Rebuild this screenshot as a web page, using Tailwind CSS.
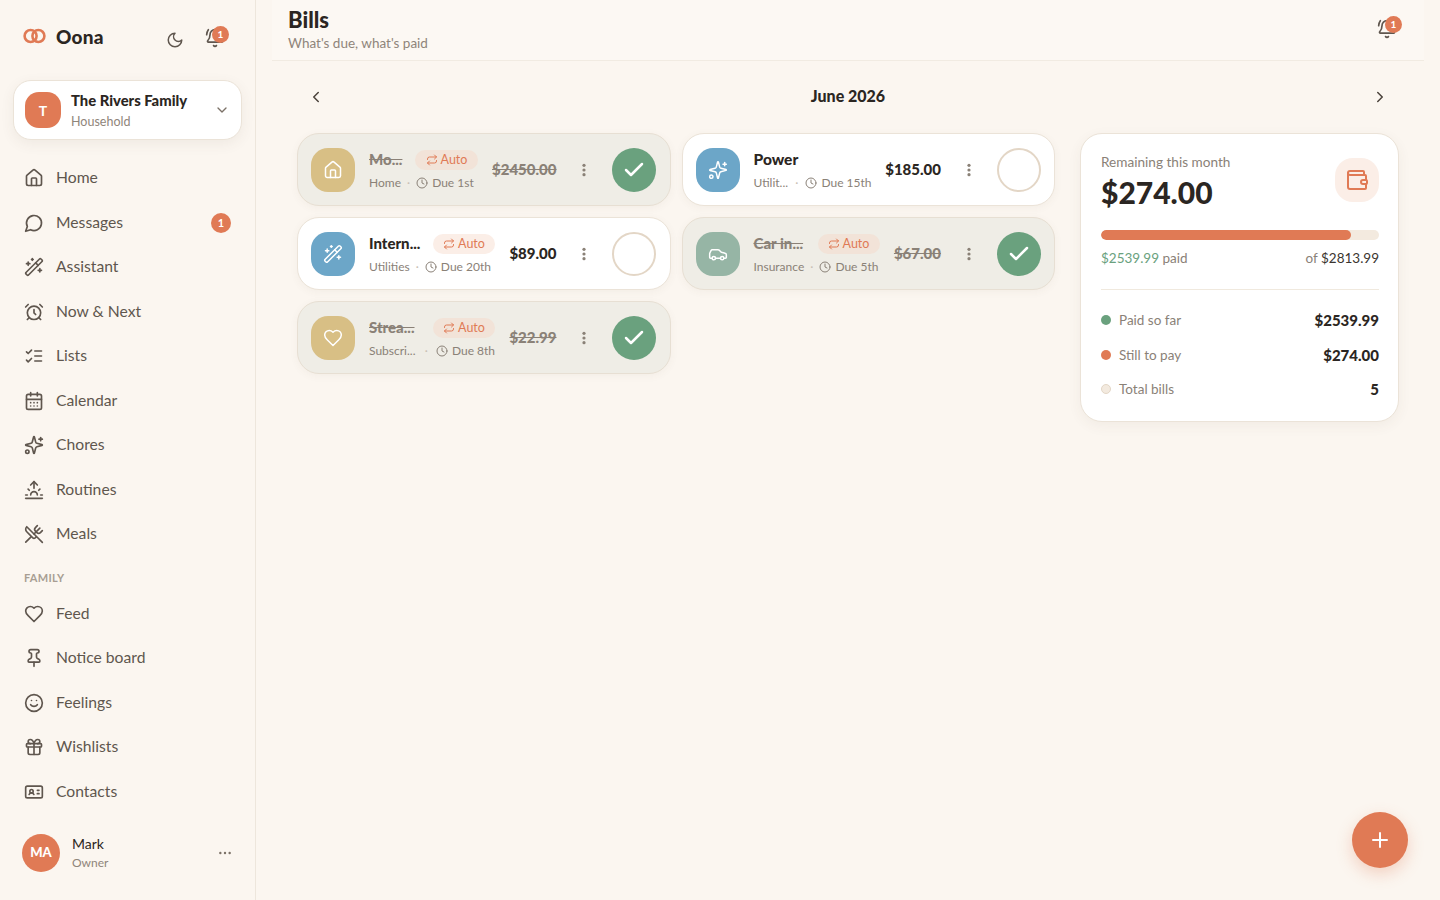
<!DOCTYPE html>
<html lang="en">
<head>
  <meta charset="UTF-8" />
  <title>Bills</title>
  <script src="https://cdn.jsdelivr.net/npm/@tailwindcss/browser@4"></script>
</head>
<body class="bg-[#fbf6f0] text-[#2b2622] font-['Lato',sans-serif]">

<!-- Icons -->
<svg class="hidden">
  <symbol id="i-house" viewBox="0 0 24 24"><path d="M15 21v-8a1 1 0 0 0-1-1h-4a1 1 0 0 0-1 1v8"/><path d="M3 10a2 2 0 0 1 .709-1.528l7-5.999a2 2 0 0 1 2.582 0l7 5.999A2 2 0 0 1 21 10v9a2 2 0 0 1-2 2H5a2 2 0 0 1-2-2z"/></symbol>
  <symbol id="i-message" viewBox="0 0 24 24"><path d="M7.9 20A9 9 0 1 0 4 16.1L2 22Z"/></symbol>
  <symbol id="i-wand" viewBox="0 0 24 24"><path d="m21.64 3.64-1.28-1.28a1.21 1.21 0 0 0-1.72 0L2.36 18.64a1.21 1.21 0 0 0 0 1.72l1.28 1.28a1.2 1.2 0 0 0 1.72 0L21.64 5.36a1.2 1.2 0 0 0 0-1.72"/><path d="m14 7 3 3"/><path d="M5 6v4"/><path d="M19 14v4"/><path d="M10 2v2"/><path d="M7 8H3"/><path d="M21 16h-4"/><path d="M11 3H9"/></symbol>
  <symbol id="i-alarm" viewBox="0 0 24 24"><circle cx="12" cy="13" r="8"/><path d="M12 9v4l2 2"/><path d="M5 3 2 6"/><path d="m22 6-3-3"/><path d="M6.38 18.7 4 21"/><path d="M17.64 18.67 20 21"/></symbol>
  <symbol id="i-list" viewBox="0 0 24 24"><path d="m3 17 2 2 4-4"/><path d="m3 7 2 2 4-4"/><path d="M13 6h8"/><path d="M13 12h8"/><path d="M13 18h8"/></symbol>
  <symbol id="i-calendar" viewBox="0 0 24 24"><path d="M8 2v4"/><path d="M16 2v4"/><rect x="3" y="4" width="18" height="18" rx="2"/><path d="M3 10h18"/><path d="M8 14h.01"/><path d="M12 14h.01"/><path d="M16 14h.01"/><path d="M8 18h.01"/><path d="M12 18h.01"/><path d="M16 18h.01"/></symbol>
  <symbol id="i-sparkles" viewBox="0 0 24 24"><path d="M9.937 15.5A2 2 0 0 0 8.5 14.063l-6.135-1.582a.5.5 0 0 1 0-.962L8.5 9.936A2 2 0 0 0 9.937 8.5l1.582-6.135a.5.5 0 0 1 .963 0L14.063 8.5A2 2 0 0 0 15.5 9.937l6.135 1.581a.5.5 0 0 1 0 .964L15.5 14.063a2 2 0 0 0-1.437 1.437l-1.582 6.135a.5.5 0 0 1-.963 0z"/><path d="M20 3v4"/><path d="M22 5h-4"/><circle cx="4" cy="20" r="2"/></symbol>
  <symbol id="i-sunrise" viewBox="0 0 24 24"><path d="M12 2v8"/><path d="m4.93 10.93 1.41 1.41"/><path d="M2 18h2"/><path d="M20 18h2"/><path d="m19.07 10.93-1.41 1.41"/><path d="M22 22H2"/><path d="m8 6 4-4 4 4"/><path d="M16 18a4 4 0 0 0-8 0"/></symbol>
  <symbol id="i-utensils" viewBox="0 0 24 24"><path d="m16 2-2.3 2.3a3 3 0 0 0 0 4.2l1.8 1.8a3 3 0 0 0 4.2 0L22 8"/><path d="M15 15 3.3 3.3a4.2 4.2 0 0 0 0 6l7.3 7.3c.7.7 2 .7 2.8 0L15 15Zm0 0 7 7"/><path d="m2.1 21.8 6.4-6.3"/><path d="m19 5-7 7"/></symbol>
  <symbol id="i-heart" viewBox="0 0 24 24"><path d="M19 14c1.49-1.46 3-3.21 3-5.5A5.5 5.5 0 0 0 16.5 3c-1.76 0-3 .5-4.5 2-1.5-1.5-2.74-2-4.5-2A5.5 5.5 0 0 0 2 8.5c0 2.3 1.5 4.05 3 5.5l7 7Z"/></symbol>
  <symbol id="i-pin" viewBox="0 0 24 24"><path d="M12 17v5"/><path d="M9 10.76a2 2 0 0 1-1.11 1.79l-1.78.9A2 2 0 0 0 5 15.24V16a1 1 0 0 0 1 1h12a1 1 0 0 0 1-1v-.76a2 2 0 0 0-1.11-1.79l-1.78-.9A2 2 0 0 1 15 10.76V7a1 1 0 0 1 1-1 2 2 0 0 0 0-4H8a2 2 0 0 0 0 4 1 1 0 0 1 1 1z"/></symbol>
  <symbol id="i-smile" viewBox="0 0 24 24"><circle cx="12" cy="12" r="10"/><path d="M8 14s1.5 2 4 2 4-2 4-2"/><path d="M9 9h.01"/><path d="M15 9h.01"/></symbol>
  <symbol id="i-gift" viewBox="0 0 24 24"><rect x="3" y="8" width="18" height="4" rx="1"/><path d="M12 8v13"/><path d="M19 12v7a2 2 0 0 1-2 2H7a2 2 0 0 1-2-2v-7"/><path d="M7.5 8a2.5 2.5 0 0 1 0-5A4.8 8 0 0 1 12 8a4.8 8 0 0 1 4.5-5 2.5 2.5 0 0 1 0 5"/></symbol>
  <symbol id="i-contact" viewBox="0 0 24 24"><path d="M16 10h2"/><path d="M16 14h2"/><path d="M6.17 15a3 3 0 0 1 5.66 0"/><circle cx="9" cy="11" r="2"/><rect x="2" y="5" width="20" height="14" rx="2"/></symbol>
  <symbol id="i-moon" viewBox="0 0 24 24"><path d="M12 3a6 6 0 0 0 9 9 9 9 0 1 1-9-9Z"/></symbol>
  <symbol id="i-bell" viewBox="0 0 24 24"><path d="M10.268 21a2 2 0 0 0 3.464 0"/><path d="M22 8c0-2.3-.8-4.3-2-6"/><path d="M3.262 15.326A1 1 0 0 0 4 17h16a1 1 0 0 0 .74-1.673C19.41 13.956 18 12.499 18 8A6 6 0 0 0 6 8c0 4.499-1.411 5.956-2.738 7.326"/><path d="M4 2C2.8 3.7 2 5.7 2 8"/></symbol>
  <symbol id="i-repeat" viewBox="0 0 24 24"><path d="m17 2 4 4-4 4"/><path d="M3 11v-1a4 4 0 0 1 4-4h14"/><path d="m7 22-4-4 4-4"/><path d="M21 13v1a4 4 0 0 1-4 4H3"/></symbol>
  <symbol id="i-clock" viewBox="0 0 24 24"><circle cx="12" cy="12" r="10"/><path d="M12 6v6l4 2"/></symbol>
  <symbol id="i-car" viewBox="0 0 24 24"><path d="M19 17h2c.6 0 1-.4 1-1v-3c0-.9-.7-1.7-1.500-1.900C18.700 10.600 16 10 16 10s-1.300-1.400-2.200-2.300c-.5-.4-1.100-.7-1.800-.7H5c-.6 0-1.100.4-1.400.9l-1.400 2.900A3.700 3.700 0 0 0 2 12v4c0 .6.4 1 1 1h2"/><circle cx="7" cy="17" r="2"/><path d="M9 17h6"/><circle cx="17" cy="17" r="2"/></symbol>
  <symbol id="i-wallet" viewBox="0 0 24 24"><path d="M19 7V4a1 1 0 0 0-1-1H5a2 2 0 0 0 0 4h15a1 1 0 0 1 1 1v4h-3a2 2 0 0 0 0 4h3a1 1 0 0 0 1-1v-2a1 1 0 0 0-1-1"/><path d="M3 5v14a2 2 0 0 0 2 2h15a1 1 0 0 0 1-1v-4"/></symbol>
  <symbol id="i-check" viewBox="0 0 24 24"><path d="M20 6 9 17l-5-5"/></symbol>
  <symbol id="i-dots" viewBox="0 0 24 24"><circle cx="12" cy="5" r="2.400"/><circle cx="12" cy="12" r="2.400"/><circle cx="12" cy="19" r="2.400"/></symbol>
</svg>

<div class="flex h-[900px] overflow-hidden">

  <!-- Sidebar -->
  <aside class="w-[256px] shrink-0 border-r border-[#ede6dc] flex flex-col">
    <div class="h-[80px] shrink-0 pl-[23px] pr-[30px] pb-[8px] flex items-center">
      <svg class="w-[23px] h-[16px] mr-[10px]" viewBox="0 0 23 16" fill="none" stroke="#e07a55" stroke-width="2.600">
        <circle cx="7.600" cy="8" r="6"/><circle cx="15.400" cy="8" r="6"/>
      </svg>
      <span class="text-[19px] leading-none font-black tracking-[0.2px]">Oona</span>
      <svg class="w-[18px] h-[18px] ml-auto mt-[8px] fill-none stroke-[#5f564e] stroke-2 [stroke-linecap:round] [stroke-linejoin:round]"><use href="#i-moon"/></svg>
      <div class="relative ml-[21px] mt-[4px] w-[20px] h-[20px]">
        <svg class="w-[20px] h-[20px] fill-none stroke-[#5f564e] stroke-2 [stroke-linecap:round] [stroke-linejoin:round]"><use href="#i-bell"/></svg>
        <span class="absolute -top-[2px] left-[7px] w-[17px] h-[17px] rounded-full bg-[#e07a55] text-white text-[10px] font-bold flex items-center justify-center">1</span>
      </div>
    </div>

    <div class="mx-[13px] h-[60px] shrink-0 bg-white border border-[#ebe3d8] rounded-[18px] shadow-[0_4px_14px_rgba(90,70,50,0.07)] flex items-center pl-[11px] pr-[11px]">
      <div class="w-[36px] h-[36px] rounded-[14px] bg-[#e07a55] text-white font-bold text-[14px] flex items-center justify-center">T</div>
      <div class="ml-[10px] flex-1">
        <div class="text-[14.800px] leading-[18px] font-black">The Rivers Family</div>
        <div class="text-[12.500px] leading-[16px] mt-[5px] text-[#8f857a]">Household</div>
      </div>
      <svg class="w-[16px] h-[16px] fill-none stroke-[#7b7167] stroke-2 [stroke-linecap:round] [stroke-linejoin:round]" viewBox="0 0 24 24"><path d="m6 9 6 6 6-6"/></svg>
    </div>

    <nav class="mt-[16px] text-[15.700px] text-[#5f564e]">
      <a class="h-[44.500px] pl-[24px] pr-[24px] flex items-center gap-[12px]"><svg class="w-[20px] h-[20px] fill-none stroke-current stroke-2 [stroke-linecap:round] [stroke-linejoin:round]"><use href="#i-house"/></svg>Home</a>
      <a class="h-[44.500px] pl-[24px] pr-[24px] flex items-center gap-[12px]"><svg class="w-[20px] h-[20px] fill-none stroke-current stroke-2 [stroke-linecap:round] [stroke-linejoin:round]"><use href="#i-message"/></svg>Messages<span class="ml-auto w-[20px] h-[20px] rounded-full bg-[#e07a55] text-white text-[11px] font-bold flex items-center justify-center">1</span></a>
      <a class="h-[44.500px] pl-[24px] pr-[24px] flex items-center gap-[12px]"><svg class="w-[20px] h-[20px] fill-none stroke-current stroke-2 [stroke-linecap:round] [stroke-linejoin:round]"><use href="#i-wand"/></svg>Assistant</a>
      <a class="h-[44.500px] pl-[24px] pr-[24px] flex items-center gap-[12px]"><svg class="w-[20px] h-[20px] fill-none stroke-current stroke-2 [stroke-linecap:round] [stroke-linejoin:round]"><use href="#i-alarm"/></svg>Now &amp; Next</a>
      <a class="h-[44.500px] pl-[24px] pr-[24px] flex items-center gap-[12px]"><svg class="w-[20px] h-[20px] fill-none stroke-current stroke-2 [stroke-linecap:round] [stroke-linejoin:round]"><use href="#i-list"/></svg>Lists</a>
      <a class="h-[44.500px] pl-[24px] pr-[24px] flex items-center gap-[12px]"><svg class="w-[20px] h-[20px] fill-none stroke-current stroke-2 [stroke-linecap:round] [stroke-linejoin:round]"><use href="#i-calendar"/></svg>Calendar</a>
      <a class="h-[44.500px] pl-[24px] pr-[24px] flex items-center gap-[12px]"><svg class="w-[20px] h-[20px] fill-none stroke-current stroke-2 [stroke-linecap:round] [stroke-linejoin:round]"><use href="#i-sparkles"/></svg>Chores</a>
      <a class="h-[44.500px] pl-[24px] pr-[24px] flex items-center gap-[12px]"><svg class="w-[20px] h-[20px] fill-none stroke-current stroke-2 [stroke-linecap:round] [stroke-linejoin:round]"><use href="#i-sunrise"/></svg>Routines</a>
      <a class="h-[44.500px] pl-[24px] pr-[24px] flex items-center gap-[12px]"><svg class="w-[20px] h-[20px] fill-none stroke-current stroke-2 [stroke-linecap:round] [stroke-linejoin:round]"><use href="#i-utensils"/></svg>Meals</a>

      <div class="pl-[24px] h-[35px] pt-[13px] text-[11px] leading-[16px] font-bold tracking-[0.3px] text-[#a89e93]">FAMILY</div>

      <a class="h-[44.500px] pl-[24px] pr-[24px] flex items-center gap-[12px]"><svg class="w-[20px] h-[20px] fill-none stroke-current stroke-2 [stroke-linecap:round] [stroke-linejoin:round]"><use href="#i-heart"/></svg>Feed</a>
      <a class="h-[44.500px] pl-[24px] pr-[24px] flex items-center gap-[12px]"><svg class="w-[20px] h-[20px] fill-none stroke-current stroke-2 [stroke-linecap:round] [stroke-linejoin:round]"><use href="#i-pin"/></svg>Notice board</a>
      <a class="h-[44.500px] pl-[24px] pr-[24px] flex items-center gap-[12px]"><svg class="w-[20px] h-[20px] fill-none stroke-current stroke-2 [stroke-linecap:round] [stroke-linejoin:round]"><use href="#i-smile"/></svg>Feelings</a>
      <a class="h-[44.500px] pl-[24px] pr-[24px] flex items-center gap-[12px]"><svg class="w-[20px] h-[20px] fill-none stroke-current stroke-2 [stroke-linecap:round] [stroke-linejoin:round]"><use href="#i-gift"/></svg>Wishlists</a>
      <a class="h-[44.500px] pl-[24px] pr-[24px] flex items-center gap-[12px]"><svg class="w-[20px] h-[20px] fill-none stroke-current stroke-2 [stroke-linecap:round] [stroke-linejoin:round]"><use href="#i-contact"/></svg>Contacts</a>
    </nav>

    <div class="mt-auto mb-[28px] pl-[22px] pr-[22px] flex items-center">
      <div class="w-[38px] h-[38px] rounded-full bg-[#e07a55] text-white text-[13px] font-black flex items-center justify-center">MA</div>
      <div class="ml-[12px] flex-1">
        <div class="text-[14px] leading-[18px] text-[#2b2622]">Mark</div>
        <div class="text-[12px] leading-[16px] mt-[2px] text-[#8f857a]">Owner</div>
      </div>
      <svg class="w-[16px] h-[16px] fill-[#7b7167]" viewBox="0 0 24 24"><circle cx="5" cy="12" r="1.800"/><circle cx="12" cy="12" r="1.800"/><circle cx="19" cy="12" r="1.800"/></svg>
    </div>
  </aside>

  <!-- Main -->
  <main class="flex-1 min-w-0 relative">
    <header class="mx-[16px] h-[61px] border-b border-[#f1ebe2] bg-[#fcf8f3] px-[16px] flex items-center justify-between">
      <div class="-mt-[1px]">
        <h1 class="text-[22px] leading-[26px] font-black">Bills</h1>
        <p class="text-[13.500px] leading-[20px] text-[#8f857a]">What's due, what's paid</p>
      </div>
      <div class="relative w-[20px] h-[20px] mr-[11px] mt-[-3px]">
        <svg class="w-[20px] h-[20px] fill-none stroke-[#5f564e] stroke-2 [stroke-linecap:round] [stroke-linejoin:round]"><use href="#i-bell"/></svg>
        <span class="absolute -top-[3px] left-[8px] w-[17px] h-[17px] rounded-full bg-[#e07a55] text-white text-[10px] font-bold flex items-center justify-center">1</span>
      </div>
    </header>

    <div class="pl-[41px] pr-[41px]">
      <div class="h-[72px] -mx-[1px] flex items-center justify-between">
        <button class="w-10 h-10 flex items-center justify-center"><svg class="w-[18px] h-[18px] fill-none stroke-[#4a423b] stroke-2 [stroke-linecap:round] [stroke-linejoin:round]" viewBox="0 0 24 24"><path d="m15 18-6-6 6-6"/></svg></button>
        <div class="text-[16px] font-black -mt-[3px]">June 2026</div>
        <button class="w-10 h-10 flex items-center justify-center"><svg class="w-[18px] h-[18px] fill-none stroke-[#4a423b] stroke-2 [stroke-linecap:round] [stroke-linejoin:round]" viewBox="0 0 24 24"><path d="m9 18 6-6-6-6"/></svg></button>
      </div>

      <div class="flex gap-[25px] items-start">
        <!-- Bills -->
        <div class="w-[758px] shrink-0 grid grid-cols-2 gap-x-[11px] items-start">

          <div class="flex flex-col gap-[11px]">
            <div class="h-[73px] rounded-[22px] border border-[#e7dfd3] bg-[#efede6] shadow-[0_2px_8px_rgba(90,70,50,0.05)] pl-[13px] pr-[14px] flex items-center">
              <div class="w-[44px] h-[44px] shrink-0 rounded-[17px] bg-[#d8bf85] text-white flex items-center justify-center"><svg class="w-[20px] h-[20px] fill-none stroke-current stroke-[1.800] [stroke-linecap:round] [stroke-linejoin:round]"><use href="#i-house"/></svg></div>
              <div class="ml-[14px] w-[109px] shrink-0 text-[#8a8177]">
                <div class="flex items-center h-[24px] whitespace-nowrap"><span class="w-[32px] text-[15px] font-black line-through">Mo...</span><span class="ml-[14px] mt-[1px] h-[20px] w-[63px] shrink-0 rounded-full bg-[#f2e3d8] text-[#e07a55] text-[12.500px] flex items-center justify-center gap-[3px]"><svg class="w-[12px] h-[12px] fill-none stroke-current stroke-2 [stroke-linecap:round] [stroke-linejoin:round]"><use href="#i-repeat"/></svg>Auto</span></div>
                <div class="flex items-center h-[18px] mt-[2px] text-[12px] whitespace-nowrap"><span>Home</span><span class="mx-[6px] text-[#c9c0b5]">·</span><svg class="w-[12px] h-[12px] mr-[4px] shrink-0 fill-none stroke-current stroke-2 [stroke-linecap:round] [stroke-linejoin:round]"><use href="#i-clock"/></svg><span>Due 1st</span></div>
              </div>
              <div class="ml-auto text-[15px] font-black line-through text-[#8a8177]">$2450.00</div>
              <svg class="w-[16px] h-[16px] ml-[19px] mr-[20px] shrink-0 fill-[#8a8177]"><use href="#i-dots"/></svg>
              <div class="w-[44px] h-[44px] shrink-0 rounded-full bg-[#6aa17e] text-white flex items-center justify-center"><svg class="w-[24px] h-[24px] fill-none stroke-current stroke-[2.500] [stroke-linecap:round] [stroke-linejoin:round]"><use href="#i-check"/></svg></div>
            </div>

            <div class="h-[73px] rounded-[22px] border border-[#ebe3d8] bg-white shadow-[0_2px_8px_rgba(90,70,50,0.05)] pl-[13px] pr-[14px] flex items-center">
              <div class="w-[44px] h-[44px] shrink-0 rounded-[17px] bg-[#6ca6c8] text-white flex items-center justify-center"><svg class="w-[20px] h-[20px] fill-none stroke-current stroke-[1.800] [stroke-linecap:round] [stroke-linejoin:round]"><use href="#i-wand"/></svg></div>
              <div class="ml-[14px] w-[126px] shrink-0 text-[#8a8177]">
                <div class="flex items-center h-[24px] whitespace-nowrap"><span class="w-[54px] text-[15px] font-black text-[#2b2622]">Intern...</span><span class="ml-[10px] mt-[1px] h-[20px] w-[62px] shrink-0 rounded-full bg-[#fbeee7] text-[#e07a55] text-[12.500px] flex items-center justify-center gap-[3px]"><svg class="w-[12px] h-[12px] fill-none stroke-current stroke-2 [stroke-linecap:round] [stroke-linejoin:round]"><use href="#i-repeat"/></svg>Auto</span></div>
                <div class="flex items-center h-[18px] mt-[2px] text-[12px] whitespace-nowrap"><span>Utilities</span><span class="mx-[6px] text-[#c9c0b5]">·</span><svg class="w-[12px] h-[12px] mr-[4px] shrink-0 fill-none stroke-current stroke-2 [stroke-linecap:round] [stroke-linejoin:round]"><use href="#i-clock"/></svg><span>Due 20th</span></div>
              </div>
              <div class="ml-auto text-[15px] font-black">$89.00</div>
              <svg class="w-[16px] h-[16px] ml-[19px] mr-[20px] shrink-0 fill-[#8a8177]"><use href="#i-dots"/></svg>
              <div class="w-[44px] h-[44px] shrink-0 rounded-full border-2 border-[#e3d6c6]"></div>
            </div>

            <div class="h-[73px] rounded-[22px] border border-[#e7dfd3] bg-[#efede6] shadow-[0_2px_8px_rgba(90,70,50,0.05)] pl-[13px] pr-[14px] flex items-center">
              <div class="w-[44px] h-[44px] shrink-0 rounded-[17px] bg-[#d8bf85] text-white flex items-center justify-center"><svg class="w-[20px] h-[20px] fill-none stroke-current stroke-[1.800] [stroke-linecap:round] [stroke-linejoin:round]"><use href="#i-heart"/></svg></div>
              <div class="ml-[14px] w-[126px] shrink-0 text-[#8a8177]">
                <div class="flex items-center h-[24px] whitespace-nowrap"><span class="w-[48px] text-[15px] font-black line-through">Strea...</span><span class="ml-[16px] mt-[1px] h-[20px] w-[62px] shrink-0 rounded-full bg-[#f2e3d8] text-[#e07a55] text-[12.500px] flex items-center justify-center gap-[3px]"><svg class="w-[12px] h-[12px] fill-none stroke-current stroke-2 [stroke-linecap:round] [stroke-linejoin:round]"><use href="#i-repeat"/></svg>Auto</span></div>
                <div class="flex items-center h-[18px] mt-[2px] text-[12px] whitespace-nowrap"><span class="w-[48px]">Subscri...</span><span class="mx-[8px] text-[#c9c0b5]">·</span><svg class="w-[12px] h-[12px] mr-[4px] shrink-0 fill-none stroke-current stroke-2 [stroke-linecap:round] [stroke-linejoin:round]"><use href="#i-clock"/></svg><span>Due 8th</span></div>
              </div>
              <div class="ml-auto text-[15px] font-black line-through text-[#8a8177]">$22.99</div>
              <svg class="w-[16px] h-[16px] ml-[19px] mr-[20px] shrink-0 fill-[#8a8177]"><use href="#i-dots"/></svg>
              <div class="w-[44px] h-[44px] shrink-0 rounded-full bg-[#6aa17e] text-white flex items-center justify-center"><svg class="w-[24px] h-[24px] fill-none stroke-current stroke-[2.500] [stroke-linecap:round] [stroke-linejoin:round]"><use href="#i-check"/></svg></div>
            </div>
          </div>

          <div class="flex flex-col gap-[11px]">
            <div class="h-[73px] rounded-[22px] border border-[#ebe3d8] bg-white shadow-[0_2px_8px_rgba(90,70,50,0.05)] pl-[13px] pr-[13px] flex items-center">
              <div class="w-[44px] h-[44px] shrink-0 rounded-[17px] bg-[#6ca6c8] text-white flex items-center justify-center"><svg class="w-[20px] h-[20px] fill-none stroke-current stroke-[1.800] [stroke-linecap:round] [stroke-linejoin:round]"><use href="#i-sparkles"/></svg></div>
              <div class="ml-[14px] w-[118px] shrink-0 text-[#8a8177]">
                <div class="flex items-center h-[24px]"><span class="text-[15.500px] font-black text-[#2b2622]">Power</span></div>
                <div class="flex items-center h-[18px] mt-[2px] text-[12px] whitespace-nowrap"><span class="w-[36px]">Utilit...</span><span class="mx-[7px] text-[#c9c0b5]">·</span><svg class="w-[12px] h-[12px] mr-[4px] shrink-0 fill-none stroke-current stroke-2 [stroke-linecap:round] [stroke-linejoin:round]"><use href="#i-clock"/></svg><span>Due 15th</span></div>
              </div>
              <div class="ml-auto text-[15px] font-black">$185.00</div>
              <svg class="w-[16px] h-[16px] mx-[20px] shrink-0 fill-[#8a8177]"><use href="#i-dots"/></svg>
              <div class="w-[44px] h-[44px] shrink-0 rounded-full border-2 border-[#e3d6c6]"></div>
            </div>

            <div class="h-[73px] rounded-[22px] border border-[#e7dfd3] bg-[#efede6] shadow-[0_2px_8px_rgba(90,70,50,0.05)] pl-[13px] pr-[13px] flex items-center">
              <div class="w-[44px] h-[44px] shrink-0 rounded-[17px] bg-[#96b5a5] text-white flex items-center justify-center"><svg class="w-[20px] h-[20px] fill-none stroke-current stroke-[1.800] [stroke-linecap:round] [stroke-linejoin:round]"><use href="#i-car"/></svg></div>
              <div class="ml-[14px] w-[126px] shrink-0 text-[#8a8177]">
                <div class="flex items-center h-[24px] whitespace-nowrap"><span class="w-[51px] text-[15px] font-black line-through">Car in...</span><span class="ml-[13px] mt-[1px] h-[20px] w-[62px] shrink-0 rounded-full bg-[#f2e3d8] text-[#e07a55] text-[12.500px] flex items-center justify-center gap-[3px]"><svg class="w-[12px] h-[12px] fill-none stroke-current stroke-2 [stroke-linecap:round] [stroke-linejoin:round]"><use href="#i-repeat"/></svg>Auto</span></div>
                <div class="flex items-center h-[18px] mt-[2px] text-[12px] whitespace-nowrap"><span>Insurance</span><span class="mx-[6px] text-[#c9c0b5]">·</span><svg class="w-[12px] h-[12px] mr-[4px] shrink-0 fill-none stroke-current stroke-2 [stroke-linecap:round] [stroke-linejoin:round]"><use href="#i-clock"/></svg><span>Due 5th</span></div>
              </div>
              <div class="ml-auto text-[15px] font-black line-through text-[#8a8177]">$67.00</div>
              <svg class="w-[16px] h-[16px] mx-[20px] shrink-0 fill-[#8a8177]"><use href="#i-dots"/></svg>
              <div class="w-[44px] h-[44px] shrink-0 rounded-full bg-[#6aa17e] text-white flex items-center justify-center"><svg class="w-[24px] h-[24px] fill-none stroke-current stroke-[2.500] [stroke-linecap:round] [stroke-linejoin:round]"><use href="#i-check"/></svg></div>
            </div>
          </div>
        </div>

        <!-- Summary -->
        <section class="w-[319px] h-[289px] shrink-0 rounded-[22px] border border-[#ebe3d8] bg-white shadow-[0_4px_14px_rgba(90,70,50,0.06)] pl-[20px] pr-[19px] pt-[19px]">
          <div class="flex justify-between">
            <div>
              <div class="text-[13.600px] leading-[18px] text-[#8a8177]">Remaining this month</div>
              <div class="text-[30px] leading-[38px] font-black mt-[2px]">$274.00</div>
            </div>
            <div class="w-[44px] h-[44px] mt-[5px] rounded-[18px] bg-[#fbeee7] text-[#e07a55] flex items-center justify-center"><svg class="w-[24px] h-[24px] fill-none stroke-current stroke-2 [stroke-linecap:round] [stroke-linejoin:round]"><use href="#i-wallet"/></svg></div>
          </div>
          <div class="mt-[19px] h-[10px] rounded-full bg-[#f3eadf] overflow-hidden"><div class="h-full rounded-full bg-[#e07a55]" style="width:90%"></div></div>
          <div class="mt-[9px] flex justify-between text-[13.500px] leading-[18px] text-[#8a8177]">
            <span><span class="text-[#6aa17e]">$2539.99</span> paid</span>
            <span>of <span class="text-[#3b352f]">$2813.99</span></span>
          </div>
          <div class="mt-[22px] border-t border-[#f0e9de] pt-[13px] text-[13.500px] text-[#8a8177]">
            <div class="h-[34.500px] flex items-center"><span class="w-[10px] h-[10px] rounded-full bg-[#6aa17e] mr-[8px]"></span>Paid so far<span class="ml-auto text-[15px] font-black text-[#2b2622]">$2539.99</span></div>
            <div class="h-[34.500px] flex items-center"><span class="w-[10px] h-[10px] rounded-full bg-[#e07a55] mr-[8px]"></span>Still to pay<span class="ml-auto text-[15px] font-black text-[#2b2622]">$274.00</span></div>
            <div class="h-[34.500px] flex items-center"><span class="w-[10px] h-[10px] rounded-full bg-[#f3eadf] border border-[#e3d6c6] mr-[8px]"></span>Total bills<span class="ml-auto text-[15px] font-black text-[#2b2622]">5</span></div>
          </div>
        </section>
      </div>
    </div>

    <button class="absolute left-[1096px] top-[812px] w-[56px] h-[56px] rounded-full bg-[#e07a55] shadow-[0_6px_16px_rgba(224,122,85,0.3)] text-white flex items-center justify-center"><svg class="w-[24px] h-[24px] fill-none stroke-current stroke-2 [stroke-linecap:round]" viewBox="0 0 24 24"><path d="M5 12h14"/><path d="M12 5v14"/></svg></button>
  </main>
</div>
</body>
</html>
